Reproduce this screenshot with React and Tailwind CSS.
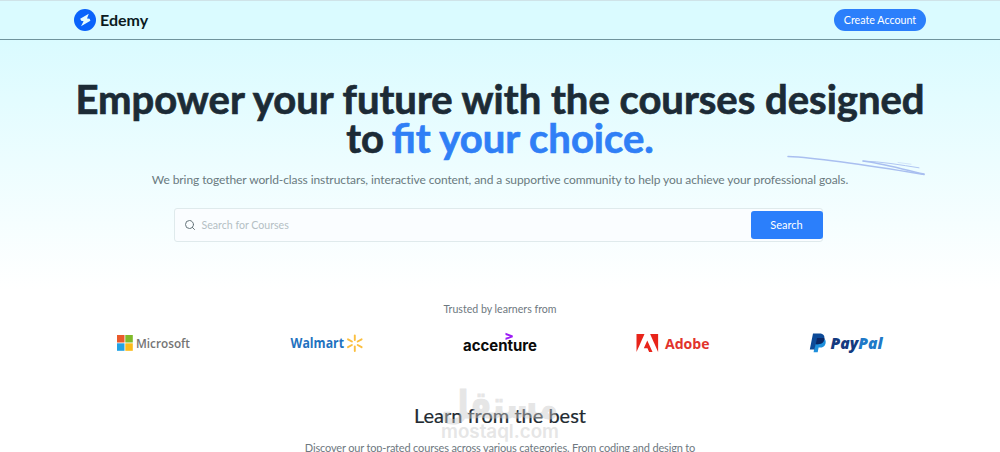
import { Search } from "lucide-react";

function Logo() {
  return (
    <div className="flex items-center gap-1">
      <svg className="size-[22px]" viewBox="0 0 22 22">
        <circle cx="11" cy="11" r="11" fill="#0a63fb" />
        <path
          d="M14.800 4.800 L6.200 9.800 L7.200 11.700 L9.600 12.200 L7 17.200 L16.400 11.800 L15.600 9.800 L13 9.400 Z"
          fill="#e6fbff"
        />
      </svg>
      <span className="text-[16px] leading-none font-bold text-[#0b1a22]">
        Edemy
      </span>
    </div>
  );
}

function Navbar() {
  return (
    <header className="flex h-10 items-center justify-between border-t border-b border-t-[#cfe3e8] border-b-[#6f939c] bg-[#dafbff] pr-[74px] pl-[74px]">
      <Logo />
      <button className="h-[22px] w-[92px] rounded-full bg-[#2b7ffb] text-[10.700px] leading-none whitespace-nowrap text-white">
        Create Account
      </button>
    </header>
  );
}

function Sketch() {
  return (
    <svg
      className="absolute top-[155px] left-[786px] h-[22px] w-[140px]"
      viewBox="0 0 140 22"
      fill="none"
      stroke="#a9bff0"
      strokeLinecap="round"
    >
      <path d="M2 1.600 C35 3 80 10 138 19.600" strokeWidth="1.500" />
      <path d="M77 6 C95 8 115 14 138 19" strokeWidth="1.500" />
      <path d="M77 6 C95 6.500 115 10 133 12.800" strokeWidth="0.900" />
      <path d="M112 7.500 L125 9.200" strokeWidth="0.400" />
    </svg>
  );
}

function Hero() {
  return (
    <section className="flex h-[250px] flex-col items-center bg-linear-to-b from-[#dafbff] to-white pt-10">
      <h1 className="text-center text-[40px] leading-[39px] font-bold whitespace-nowrap text-[#1c2b36] [-webkit-text-stroke:0.7px_currentColor]">
        Empower your future with the courses designed
        <br />
        to{" "}
        <span className="-ml-[2px] text-[#2f7ff6]">
          fit your choice.
        </span>
      </h1>
      <p className="mt-[14px] text-[12px] leading-4 tracking-[-0.085px] whitespace-nowrap text-[#6a7a80]">
        We bring together world-class instructars, interactive content, and a
        supportive community to help you achieve your professional goals.
      </p>
      <div className="mt-5 mr-1 flex h-[34px] w-[649px] items-center rounded-[3px] border border-[#dfeaec] bg-[#fafdff]">
        <Search className="ml-[9px] size-3 text-[#66757b]" strokeWidth={2} />
        <span className="ml-[6px] flex-1 pt-px text-[10.600px] text-[#b4bfc4]">
          Search for Courses
        </span>
        <button className="-mr-px h-7 w-[72px] rounded-[3px] bg-[#2b7ffb] text-[11px] text-white">
          Search
        </button>
      </div>
    </section>
  );
}

function Microsoft() {
  return (
    <svg className="h-6 w-[76px]" viewBox="0 0 76 24">
      <rect x="1" y="4" width="7.500" height="7.500" fill="#ea5a2b" />
      <rect x="9.300" y="4" width="7.500" height="7.500" fill="#7fba2a" />
      <rect x="1" y="12.300" width="7.500" height="7.500" fill="#22a2e4" />
      <rect x="9.300" y="12.300" width="7.500" height="7.500" fill="#fbbb1a" />
      <text
        x="20"
        y="17"
        fontFamily="Open Sans, sans-serif"
        fontWeight="600"
        fontSize="13"
        textLength="54"
        lengthAdjust="spacingAndGlyphs"
        fill="#747474"
      >
        Microsoft
      </text>
    </svg>
  );
}

function Walmart() {
  return (
    <svg className="h-6 w-[76px]" viewBox="0 0 76 24">
      <text
        x="1.500"
        y="17"
        fontFamily="Open Sans, sans-serif"
        fontWeight="700"
        fontSize="13.500"
        textLength="53.500"
        lengthAdjust="spacingAndGlyphs"
        fill="#1f72bf"
      >
        Walmart
      </text>
      <g stroke="#fbbf3f" strokeWidth="1.900" strokeLinecap="round">
        <path d="M65.800 4.500 V9" />
        <path d="M65.800 15.500 V20" />
        <path d="M59 8.300 L62.900 10.500" />
        <path d="M68.700 14 L72.600 16.200" />
        <path d="M72.600 8.300 L68.700 10.500" />
        <path d="M62.900 14 L59 16.200" />
      </g>
    </svg>
  );
}

function Accenture() {
  return (
    <svg className="h-6 w-[76px]" viewBox="0 0 76 24">
      <path
        d="M42.500 1.800 L49.800 4.500 V6.200 L42.500 9 V6.800 L47 5.400 L42.500 3.900 Z"
        fill="#9d1cf5"
      />
      <text
        x="0"
        y="20"
        fontFamily="Inter, sans-serif"
        fontWeight="700"
        fontSize="15"
        textLength="74"
        lengthAdjust="spacingAndGlyphs"
        fill="#0a0a0a"
      >
        accenture
      </text>
    </svg>
  );
}

function Adobe() {
  return (
    <svg className="h-6 w-[76px]" viewBox="0 0 76 24">
      <g fill="#e8241a">
        <path d="M0.500 3 H8.500 L0.500 21 Z" />
        <path d="M14.100 3 H22.100 V21 Z" />
        <path d="M11.300 9.600 L16.500 21 H13.100 L11.500 17.200 H7.800 Z" />
      </g>
      <text
        x="29"
        y="17.500"
        fontFamily="Open Sans, sans-serif"
        fontWeight="700"
        fontSize="15"
        textLength="44.500"
        lengthAdjust="spacingAndGlyphs"
        fill="#e2332c"
      >
        Adobe
      </text>
    </svg>
  );
}

function PayPal() {
  return (
    <svg className="h-6 w-[76px]" viewBox="0 0 76 24">
      <path
        d="M7 7 H13 C16.500 7.500 17.300 10 16.400 13 C15.500 15.600 13.500 16.600 11 16.600 H9.600 L8.700 21.200 H4.600 Z"
        fill="#1e8fdc"
      />
      <path
        d="M4 2.500 H10.500 C14.500 2.500 16.200 5 15.200 8.600 C14.300 12 12 13.200 9 13.200 H6.600 L5.500 18.600 H0.800 Z"
        fill="#0d4a98"
      />
      <path
        d="M8 7 H15.400 C15.300 11.500 12.500 13.200 9 13.200 H6.800 Z"
        fill="#0b2765"
      />
      <text
        x="21.500"
        y="17.500"
        fontFamily="Open Sans, sans-serif"
        fontWeight="800"
        fontStyle="italic"
        fontSize="15"
        textLength="52"
        lengthAdjust="spacingAndGlyphs"
        fill="#143a80"
      >
        Pay<tspan fill="#2079c7">Pal</tspan>
      </text>
    </svg>
  );
}

function Companies() {
  return (
    <section className="flex flex-col items-center pt-[11px]">
      <p className="text-[10.600px] leading-4 text-[#6e7880]">
        Trusted by learners from
      </p>
      <div className="mt-[14px] flex w-full justify-between pr-[115px] pl-[116px]">
        <Microsoft />
        <Walmart />
        <Accenture />
        <Adobe />
        <PayPal />
      </div>
    </section>
  );
}

function Watermark() {
  return (
    <svg
      className="absolute top-[380px] left-[436px] h-[66px] w-[128px]"
      viewBox="0 0 128 66"
      fill="#c8c8c8"
      stroke="#c8c8c8"
      opacity="0.45"
    >
      <text
        x="122"
        y="38"
        direction="rtl"
        fontFamily="DejaVu Sans, sans-serif"
        fontWeight="700"
        fontSize="38"
        strokeWidth="1"
        textLength="117"
        lengthAdjust="spacingAndGlyphs"
      >
        مستقل
      </text>
      <text
        x="5"
        y="58"
        fontFamily="Inter, sans-serif"
        fontWeight="600"
        fontSize="19"
        strokeWidth="0"
        textLength="118"
        lengthAdjust="spacingAndGlyphs"
      >
        mostaql.com
      </text>
    </svg>
  );
}

function Courses() {
  return (
    <section className="flex flex-col items-center pt-[46px]">
      <h2 className="text-[20px] leading-7 whitespace-nowrap text-[#222a31] [-webkit-text-stroke:0.2px_currentColor]">
        Learn from the best
      </h2>
      <p className="mt-[11px] text-[11px] leading-4 tracking-[-0.170px] whitespace-nowrap text-[#6e7880]">
        Discover our top-rated courses across various categories. From coding
        and design to
      </p>
    </section>
  );
}

export default function App() {
  return (
    <div className="relative h-[452px] w-[1000px] overflow-hidden bg-white font-['Lato',sans-serif]">
      <Navbar />
      <Hero />
      <Companies />
      <Courses />
      <Sketch />
      <Watermark />
    </div>
  );
}
